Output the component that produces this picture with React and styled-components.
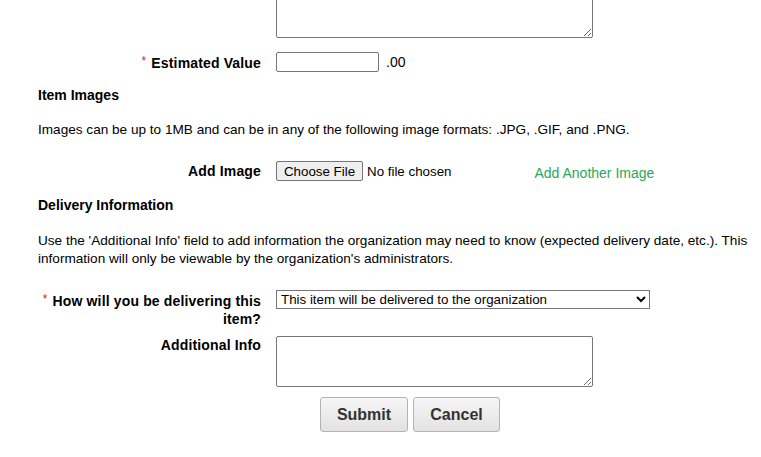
import React from "react";
import styled, { createGlobalStyle } from "styled-components";

const GlobalStyle = createGlobalStyle`
  html, body {
    margin: 0;
    padding: 0;
    background: #fff;
    overflow: hidden;
  }
  body {
    font-family: "Liberation Sans", Arial, sans-serif;
    font-size: 13px;
    color: #000;
  }
`;

const Page = styled.div`
  width: 761px;
  height: 457px;
  overflow: hidden;
`;

const Content = styled.div`
  margin-top: -13px;
  padding-left: 38px;
`;

const FormGrid = styled.div`
  display: grid;
  grid-template-columns: 223px 1fr;
  column-gap: 15px;
  align-items: ${(p) => p.$align || "center"};
  margin-top: ${(p) => p.$top || 0}px;
`;

const Label = styled.div`
  text-align: right;
  font-weight: bold;
  font-size: 14px;
  line-height: 18px;
  letter-spacing: 0.15px;
`;

const Req = styled.span`
  color: #e8112d;
  font-weight: normal;
  margin-right: 5px;
  vertical-align: 3px;
  font-size: 12px;
`;

const TextArea = styled.textarea`
  display: block;
  box-sizing: border-box;
  width: 317px;
  height: 51px;
  margin: 0;
  border: 1px solid #767676;
  border-radius: 2px;
  font-family: "Liberation Sans", Arial, sans-serif;
  font-size: 13px;
  resize: both;
`;

const Field = styled.div`
  display: flex;
  align-items: center;
  gap: ${(p) => p.$gap ?? 7}px;
`;

const TextInput = styled.input`
  box-sizing: border-box;
  width: 103px;
  height: 20px;
  margin: 0;
  border: 1px solid #767676;
  border-radius: 2px;
  padding: 1px 2px;
`;

const Cents = styled.span`
  font-size: 14px;
  color: #000;
`;

const Heading = styled.div`
  font-weight: bold;
  font-size: 14px;
  margin-top: ${(p) => p.$top}px;
`;

const Para = styled.p`
  margin: ${(p) => p.$top}px 0 0;
  font-size: 13.6px;
  line-height: 18px;
  padding-right: 8px;
`;

const FileBox = styled.div`
  display: flex;
  align-items: center;
  gap: 4px;
  font-family: "Liberation Sans", Arial, sans-serif;
  font-size: 13.33px;
`;

const FileButton = styled.button`
  box-sizing: border-box;
  height: 20px;
  width: 87px;
  padding: 0;
  margin: 0;
  border: 1px solid #767676;
  border-radius: 2px;
  background: #efefef;
  font-family: inherit;
  font-size: 13.33px;
  color: #000;
`;

const LinkText = styled.a`
  color: #27a85a;
  font-size: 14px;
  text-decoration: none;
  margin-left: 83px;
  position: relative;
  top: 2px;
`;

const Select = styled.select`
  box-sizing: border-box;
  width: 374px;
  height: 19px;
  margin: 0;
  padding: 0;
  border: 1px solid #767676;
  border-radius: 0;
  background: #fff;
  font-family: "Liberation Sans", Arial, sans-serif;
  font-size: 13.33px;
  color: #000;
`;

const Buttons = styled.div`
  display: flex;
  gap: 5px;
  padding-left: 44px;
`;

const Button = styled.button`
  box-sizing: border-box;
  width: ${(p) => p.$w}px;
  height: 35px;
  margin: 0;
  border: 1px solid #b4b4b4;
  border-radius: 3px;
  background: linear-gradient(#f6f6f6, #e2e2e2);
  font-family: "Liberation Sans", Arial, sans-serif;
  font-weight: bold;
  font-size: 16px;
  color: #333;
`;

export default function App() {
  return (
    <Page>
      <GlobalStyle />
      <Content>
        <FormGrid>
          <div />
          <TextArea />
        </FormGrid>

        <FormGrid $top={14}>
          <Label>
            <Req>*</Req>Estimated Value
          </Label>
          <Field>
            <TextInput type="text" />
            <Cents>.00</Cents>
          </Field>
        </FormGrid>

        <Heading $top={15}>Item Images</Heading>
        <Para $top={18}>
          Images can be up to 1MB and can be in any of the following image formats: .JPG, .GIF, and .PNG.
        </Para>

        <FormGrid $top={22}>
          <Label>Add Image</Label>
          <Field $gap={0}>
            <FileBox>
              <FileButton type="button">Choose File</FileButton>
              <span>No file chosen</span>
            </FileBox>
            <LinkText href="#">Add Another Image</LinkText>
          </Field>
        </FormGrid>

        <Heading $top={16}>Delivery Information</Heading>
        <Para $top={19}>
          Use the 'Additional Info' field to add information the organization may need to know (expected delivery date, etc.). This information will only be viewable by the organization's administrators.
        </Para>

        <FormGrid $top={22} $align="start">
          <Label>
            <Req>*</Req>How will you be delivering this item?
          </Label>
          <Select defaultValue="org">
            <option value="org">This item will be delivered to the organization</option>
            <option value="pickup">The organization will pick up this item</option>
          </Select>
        </FormGrid>

        <FormGrid $top={8} $align="start">
          <Label>Additional Info</Label>
          <TextArea />
        </FormGrid>

        <FormGrid $top={10}>
          <div />
          <Buttons>
            <Button type="button" $w={88}>Submit</Button>
            <Button type="button" $w={87}>Cancel</Button>
          </Buttons>
        </FormGrid>
      </Content>
    </Page>
  );
}
